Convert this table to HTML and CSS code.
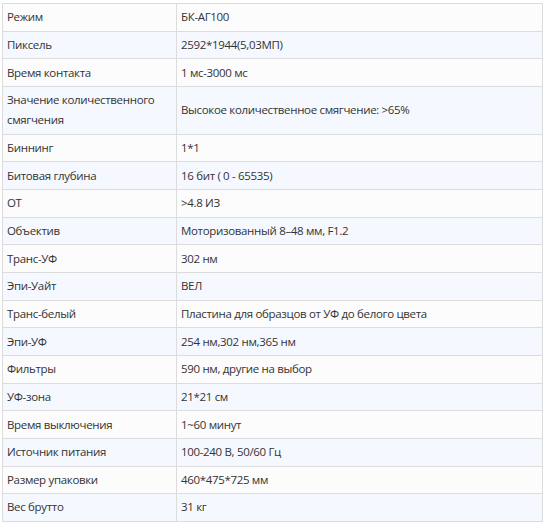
FILE: index.html
```html
<!DOCTYPE html>
<html lang="ru">
<head>
<meta charset="utf-8">
<link rel="stylesheet" href="styles.css">
</head>
<body>
<table class="spec">
<tbody>
<tr><td class="key">Режим</td><td>БК-АГ100</td></tr>
<tr><td class="key">Пиксель</td><td>2592*1944(5,03МП)</td></tr>
<tr><td class="key">Время контакта</td><td>1 мс-3000 мс</td></tr>
<tr><td class="key">Значение количественного смягчения</td><td>Высокое количественное смягчение: &gt;65%</td></tr>
<tr><td class="key">Биннинг</td><td>1*1</td></tr>
<tr><td class="key">Битовая глубина</td><td>16 бит ( 0 - 65535)</td></tr>
<tr><td class="key">ОТ</td><td>&gt;4.8 ИЗ</td></tr>
<tr><td class="key">Объектив</td><td>Моторизованный 8–48 мм, F1.2</td></tr>
<tr><td class="key">Транс-УФ</td><td>302 нм</td></tr>
<tr><td class="key">Эпи-Уайт</td><td>ВЕЛ</td></tr>
<tr><td class="key">Транс-белый</td><td>Пластина для образцов от УФ до белого цвета</td></tr>
<tr><td class="key">Эпи-УФ</td><td>254 нм,302 нм,365 нм</td></tr>
<tr><td class="key">Фильтры</td><td>590 нм, другие на выбор</td></tr>
<tr><td class="key">УФ-зона</td><td>21*21 см</td></tr>
<tr><td class="key">Время выключения</td><td>1~60 минут</td></tr>
<tr><td class="key">Источник питания</td><td>100-240 В, 50/60 Гц</td></tr>
<tr><td class="key">Размер упаковки</td><td>460*475*725 мм</td></tr>
<tr><td class="key">Вес брутто</td><td>31 кг</td></tr>
</tbody>
</table>
</body>
</html>
```
FILE: styles.css
```css
html, body {
  background: #ffffff;
}
body {
  margin: 3px 4px 0 2px;
  font-family: "Open Sans", "Noto Sans", sans-serif;
  font-size: 11.5px;
  letter-spacing: -0.33px;
  color: #333333;
}
.spec {
  border-collapse: collapse;
  width: 541px;
  table-layout: fixed;
}
.spec td {
  border: 1px solid #dcdcdc;
  padding: 3.33px 4px;
  line-height: 20px;
  vertical-align: middle;
  background: #fcfcfc;
}
.spec tr:nth-child(even) td {
  background: #f5f9ff;
}
.spec td.key {
  width: 165px;
}
```
